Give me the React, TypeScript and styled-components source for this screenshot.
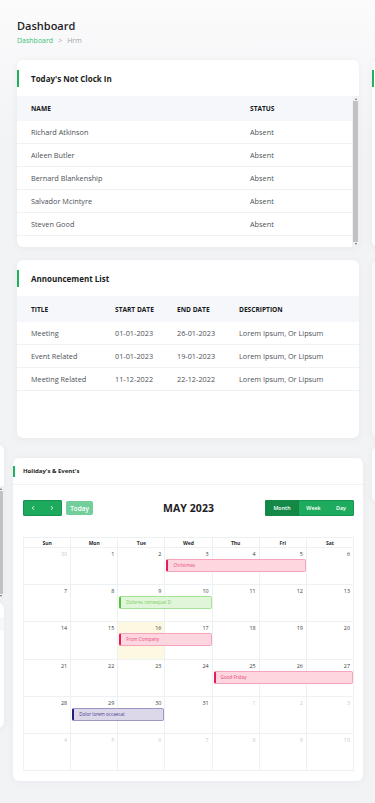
import styled, { createGlobalStyle } from "styled-components";
import { ChevronLeft, ChevronRight } from "lucide-react";

type Absentee = { name: string; status: string };
type Announcement = { title: string; start: string; end: string; description: string };
type Tone = "pink" | "green" | "purple";
type CalEvent = { week: number; start: number; span: number; label: string; tone: Tone };

const absentees: Absentee[] = [
  { name: "Richard Atkinson", status: "Absent" },
  { name: "Aileen Butler", status: "Absent" },
  { name: "Bernard Blankenship", status: "Absent" },
  { name: "Salvador Mcintyre", status: "Absent" },
  { name: "Steven Good", status: "Absent" },
];

const announcements: Announcement[] = [
  { title: "Meeting", start: "01-01-2023", end: "26-01-2023", description: "Lorem Ipsum, Or Lipsum" },
  { title: "Event Related", start: "01-01-2023", end: "19-01-2023", description: "Lorem Ipsum, Or Lipsum" },
  { title: "Meeting Related", start: "11-12-2022", end: "22-12-2022", description: "Lorem Ipsum, Or Lipsum" },
];

const weekDays = ["Sun", "Mon", "Tue", "Wed", "Thu", "Fri", "Sat"];

const weeks: number[][] = [
  [30, 1, 2, 3, 4, 5, 6],
  [7, 8, 9, 10, 11, 12, 13],
  [14, 15, 16, 17, 18, 19, 20],
  [21, 22, 23, 24, 25, 26, 27],
  [28, 29, 30, 31, 1, 2, 3],
  [4, 5, 6, 7, 8, 9, 10],
];

const events: CalEvent[] = [
  { week: 0, start: 4, span: 3, label: "Christmas", tone: "pink" },
  { week: 1, start: 3, span: 2, label: "Dolores consequat D", tone: "green" },
  { week: 2, start: 3, span: 2, label: "From Company", tone: "pink" },
  { week: 3, start: 5, span: 3, label: "Good Friday", tone: "pink" },
  { week: 4, start: 2, span: 2, label: "Dolor lorem occaecat", tone: "purple" },
];

const tones: Record<Tone, { bg: string; border: string; accent: string; text: string }> = {
  pink: { bg: "#fdd6e0", border: "#f6a3bc", accent: "#e8195c", text: "#ea4a7a" },
  green: { bg: "#e0f5da", border: "#a6e293", accent: "#4dc432", text: "#78cf60" },
  purple: { bg: "#dcd8ea", border: "#9d96c5", accent: "#271c7c", text: "#4a3e8e" },
};

const isMuted = (week: number, index: number) =>
  (week === 0 && index === 0) || (week === 4 && index >= 4) || week === 5;

const GlobalStyle = createGlobalStyle`
  html, body {
    margin: 0;
    padding: 0;
  }
  body {
    font-family: "Open Sans", "Noto Sans", sans-serif;
    background-color: #f2f3f5;
    background-image: linear-gradient(180deg, #fbfbfc 0px, #f2f3f5 150px);
    background-repeat: no-repeat;
    color: #333;
  }
`;

const Page = styled.div`
  width: 375px;
  height: 803px;
  overflow: hidden;
  padding-top: 19px;
  box-sizing: border-box;
`;

const PageHeader = styled.header`
  display: flex;
  flex-direction: column;
  gap: 3px;
  padding: 0 17px;
`;

const PageTitle = styled.h1`
  margin: 0;
  font-size: 11px;
  line-height: 14px;
  font-weight: 600;
  color: #1f2226;
`;

const Crumbs = styled.nav`
  display: flex;
  align-items: center;
  gap: 5px;
  font-size: 7px;
  line-height: 10px;
  color: #a2a6ab;
`;

const CrumbLink = styled.span`
  color: #3cbf79;
`;

const SlideRow = styled.div<{ $top: number; $gap: number; $offset: number }>`
  display: flex;
  align-items: flex-start;
  gap: ${(p) => p.$gap}px;
  margin-top: ${(p) => p.$top}px;
  padding-left: ${(p) => p.$offset}px;
`;

const Card = styled.section<{ $width: number; $height?: number; $shift?: number; $dim?: boolean }>`
  flex-shrink: 0;
  width: ${(p) => p.$width}px;
  height: ${(p) => (p.$height ? `${p.$height}px` : "auto")};
  margin-top: ${(p) => p.$shift ?? 0}px;
  background: ${(p) => (p.$dim ? "#f8f9fa" : "#fff")};
  border-radius: 6px;
  box-shadow: 0 1px 8px rgba(30, 40, 60, 0.05);
  overflow: hidden;
  box-sizing: border-box;
`;

const CardHead = styled.div<{ $height: number; $small?: boolean }>`
  display: flex;
  align-items: center;
  height: ${(p) => p.$height}px;
  padding-left: ${(p) => (p.$small ? 10 : 14)}px;
  box-sizing: border-box;
  font-size: ${(p) => (p.$small ? 6 : 8)}px;
  font-weight: 700;
  color: #1b1d20;
  border-bottom: ${(p) => (p.$small ? "1px solid #f1f2f4" : "none")};

  &::before {
    content: "";
    flex: 0 0 2px;
    height: ${(p) => (p.$small ? 11 : 17)}px;
    margin-left: ${(p) => (p.$small ? -10 : -14)}px;
    margin-right: ${(p) => (p.$small ? 8 : 12)}px;
    background: #1fb25e;
  }
`;

const ScrollFrame = styled.div<{ $height: number }>`
  display: flex;
  height: ${(p) => p.$height}px;
`;

const ScrollContent = styled.div`
  flex: 1;
  min-width: 0;
  overflow: hidden;
`;

const ScrollRail = styled.div`
  display: flex;
  flex-direction: column;
  align-items: center;
  flex: 0 0 7px;
  background: #f1f1f1;
`;

const RailArrow = styled.span<{ $down?: boolean }>`
  flex: 0 0 2px;
  width: 0;
  height: 0;
  margin-top: ${(p) => (p.$down ? 1 : 2)}px;
  margin-bottom: ${(p) => (p.$down ? 2 : 1)}px;
  border-left: 1.5px solid transparent;
  border-right: 1.5px solid transparent;
  ${(p) => (p.$down ? "border-top: 2px solid #6b6b6b;" : "border-bottom: 2px solid #6b6b6b;")}
  box-sizing: border-box;
`;

const RailThumb = styled.div<{ $fill: number }>`
  align-self: stretch;
  flex: ${(p) => p.$fill};
  margin: 0 1px;
  background: #c1c1c1;
`;

const RailSpace = styled.div<{ $fill: number }>`
  flex: ${(p) => p.$fill};
`;

const HeadRow = styled.div<{ $cols: string; $height: number }>`
  display: grid;
  grid-template-columns: ${(p) => p.$cols};
  align-items: center;
  height: ${(p) => p.$height}px;
  padding-left: 14px;
  background: #f6f7fb;
  font-size: 6.6px;
  font-weight: 700;
  text-transform: uppercase;
  color: #15171a;
`;

const BodyRow = styled.div<{ $cols: string }>`
  display: grid;
  grid-template-columns: ${(p) => p.$cols};
  align-items: center;
  height: 23px;
  padding-left: 14px;
  box-sizing: border-box;
  border-bottom: 1px solid #eff1f4;
  font-size: 7.3px;
  color: #4d5157;
`;

const CalendarBody = styled.div`
  padding: 15px 9px 10px 10px;
`;

const Toolbar = styled.div`
  display: grid;
  grid-template-columns: 1fr auto 1fr;
  align-items: center;
  height: 16px;
  margin-bottom: 21px;
`;

const ToolGroup = styled.div<{ $end?: boolean }>`
  display: flex;
  align-items: center;
  gap: 4px;
  justify-self: ${(p) => (p.$end ? "end" : "start")};
`;

const NavGroup = styled.div`
  display: flex;
  width: 39px;
  height: 16px;
  border-radius: 2px;
  overflow: hidden;
  background: #1eaa5c;
  box-shadow: inset 0 0 0 1px #179250;
`;

const NavButton = styled.button`
  flex: 1;
  display: flex;
  align-items: center;
  justify-content: center;
  padding: 0;
  border: 0;
  background: transparent;
  color: #fff;
`;

const TodayButton = styled.button`
  width: 27px;
  height: 14px;
  padding: 0;
  border: 0;
  border-radius: 2px;
  background: #72cf9c;
  color: #fff;
  font-family: inherit;
  font-size: 6.4px;
  font-weight: 600;
`;

const MonthTitle = styled.h2`
  margin: 0;
  font-size: 10.5px;
  font-weight: 700;
  color: #1e2023;
  letter-spacing: 0.1px;
`;

const ViewGroup = styled.div`
  display: flex;
  height: 16px;
  border-radius: 2px;
  overflow: hidden;
  background: #1fab5d;
  box-shadow: inset 0 0 0 1px #17944f;
`;

const ViewButton = styled.button<{ $width: number; $active?: boolean }>`
  width: ${(p) => p.$width}px;
  padding: 0;
  border: 0;
  background: ${(p) => (p.$active ? "#148947" : "transparent")};
  color: #fff;
  font-family: inherit;
  font-size: 5.4px;
  font-weight: 600;
`;

const MonthGrid = styled.div`
  border: 1px solid #eef0f2;
  border-right: 0;
  border-bottom: 0;
`;

const DayNames = styled.div`
  display: grid;
  grid-template-columns: repeat(7, 1fr);
  height: 10px;
`;

const DayName = styled.div`
  display: flex;
  align-items: center;
  justify-content: center;
  border-right: 1px solid #eef0f2;
  border-bottom: 1px solid #eef0f2;
  font-size: 5px;
  font-weight: 700;
  color: #2a2c30;
`;

const Week = styled.div`
  display: grid;
  grid-template-columns: repeat(7, 1fr);
  grid-template-rows: 11px 13px 1fr;
  height: 37.2px;
`;

const DayCell = styled.div<{ $col: number; $today?: boolean; $muted?: boolean }>`
  grid-column: ${(p) => p.$col};
  grid-row: 1 / 4;
  padding: 2px 3px 0 0;
  text-align: right;
  border-right: 1px solid #eef0f2;
  border-bottom: 1px solid #eef0f2;
  background: ${(p) => (p.$today ? "#fdf8e1" : "transparent")};
  font-size: 5.4px;
  line-height: 8px;
  color: ${(p) => (p.$muted ? "#c9cbce" : "#3a3c40")};
`;

const EventBar = styled.div<{ $start: number; $span: number; $tone: Tone }>`
  grid-column: ${(p) => p.$start} / span ${(p) => p.$span};
  grid-row: 2;
  margin: 0 1px;
  padding-left: 5px;
  box-sizing: border-box;
  border: 1px solid ${(p) => tones[p.$tone].border};
  border-left: 2px solid ${(p) => tones[p.$tone].accent};
  border-radius: 2px;
  background: ${(p) => tones[p.$tone].bg};
  color: ${(p) => tones[p.$tone].text};
  font-size: 4.6px;
  line-height: 11px;
  white-space: nowrap;
  overflow: hidden;
`;

const GhostStack = styled.div<{ $shift: number }>`
  display: flex;
  flex-direction: column;
  gap: 4px;
  flex-shrink: 0;
  width: 342px;
  margin-left: ${(p) => p.$shift}px;
`;

const GhostHead = styled.div`
  height: 41px;
`;

const GhostHeadRow = styled.div`
  height: 14px;
  margin-top: 14px;
  background: #f6f7fb;
`;

const clockCols = "219px 1fr";
const noticeCols = "84px 62px 62px 1fr";

const Scrollbar = ({ before = 0, thumb = 1, after = 0 }: { before?: number; thumb?: number; after?: number }) => (
  <ScrollRail>
    <RailArrow />
    <RailSpace $fill={before} />
    <RailThumb $fill={thumb} />
    <RailSpace $fill={after} />
    <RailArrow $down />
  </ScrollRail>
);

export default function App() {
  return (
    <Page>
      <GlobalStyle />
      <PageHeader>
        <PageTitle>Dashboard</PageTitle>
        <Crumbs>
          <CrumbLink>Dashboard</CrumbLink>
          <span>&gt;</span>
          <span>Hrm</span>
        </Crumbs>
      </PageHeader>

      <SlideRow $top={14} $gap={13} $offset={17}>
        <Card $width={342} $height={187}>
          <CardHead $height={36}>Today's Not Clock In</CardHead>
          <ScrollFrame $height={151}>
            <ScrollContent>
              <HeadRow $cols={clockCols} $height={25}>
                <span>Name</span>
                <span>Status</span>
              </HeadRow>
              {absentees.map((a) => (
                <BodyRow key={a.name} $cols={clockCols}>
                  <span>{a.name}</span>
                  <span>{a.status}</span>
                </BodyRow>
              ))}
            </ScrollContent>
            <Scrollbar />
          </ScrollFrame>
        </Card>
        <Card $width={342} $height={187}>
          <CardHead $height={36} />
        </Card>
      </SlideRow>

      <SlideRow $top={13} $gap={13} $offset={17}>
        <Card $width={342} $height={178}>
          <CardHead $height={36}>Announcement List</CardHead>
          <HeadRow $cols={noticeCols} $height={26}>
            <span>Title</span>
            <span>Start Date</span>
            <span>End Date</span>
            <span>Description</span>
          </HeadRow>
          {announcements.map((n) => (
            <BodyRow key={n.title} $cols={noticeCols}>
              <span>{n.title}</span>
              <span>{n.start}</span>
              <span>{n.end}</span>
              <span>{n.description}</span>
            </BodyRow>
          ))}
        </Card>
        <Card $width={342} $height={178} $dim />
      </SlideRow>

      <SlideRow $top={7} $gap={9} $offset={0}>
        <GhostStack $shift={-338}>
          <Card $width={342} $height={154}>
            <GhostHead />
            <ScrollFrame $height={113}>
              <ScrollContent />
              <Scrollbar />
            </ScrollFrame>
          </Card>
          <Card $width={342} $height={125}>
            <GhostHeadRow />
          </Card>
        </GhostStack>

        <Card $width={350} $shift={13}>
          <CardHead $height={27} $small>
            Holiday's &amp; Event's
          </CardHead>
          <CalendarBody>
            <Toolbar>
              <ToolGroup>
                <NavGroup>
                  <NavButton aria-label="Previous">
                    <ChevronLeft size={6} strokeWidth={3.5} />
                  </NavButton>
                  <NavButton aria-label="Next">
                    <ChevronRight size={6} strokeWidth={3.5} />
                  </NavButton>
                </NavGroup>
                <TodayButton>Today</TodayButton>
              </ToolGroup>
              <MonthTitle>MAY 2023</MonthTitle>
              <ToolGroup $end>
                <ViewGroup>
                  <ViewButton $width={34} $active>
                    Month
                  </ViewButton>
                  <ViewButton $width={29}>Week</ViewButton>
                  <ViewButton $width={26}>Day</ViewButton>
                </ViewGroup>
              </ToolGroup>
            </Toolbar>

            <MonthGrid>
              <DayNames>
                {weekDays.map((d) => (
                  <DayName key={d}>{d}</DayName>
                ))}
              </DayNames>
              {weeks.map((days, w) => (
                <Week key={w}>
                  {days.map((d, i) => (
                    <DayCell
                      key={`${w}-${i}`}
                      $col={i + 1}
                      $today={w === 2 && i === 2}
                      $muted={isMuted(w, i)}
                    >
                      {d}
                    </DayCell>
                  ))}
                  {events
                    .filter((e) => e.week === w)
                    .map((e) => (
                      <EventBar key={e.label} $start={e.start} $span={e.span} $tone={e.tone}>
                        {e.label}
                      </EventBar>
                    ))}
                </Week>
              ))}
            </MonthGrid>
          </CalendarBody>
        </Card>

        <Card $width={342} $height={55} $shift={2} />
      </SlideRow>
    </Page>
  );
}
